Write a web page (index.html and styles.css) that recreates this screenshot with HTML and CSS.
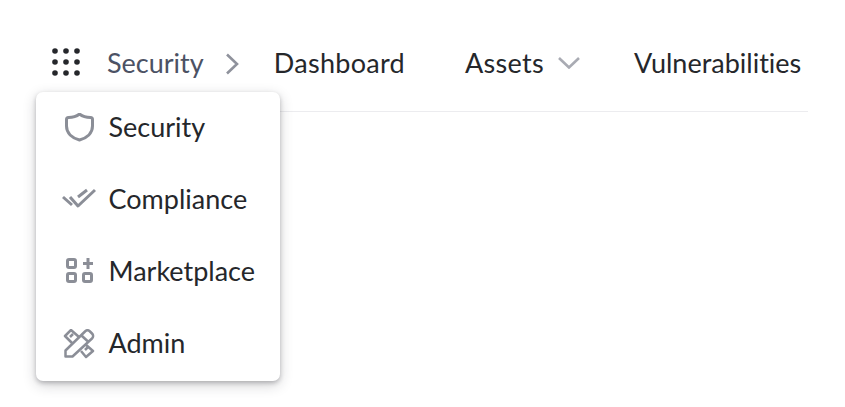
FILE: index.html
```html
<!DOCTYPE html>
<html lang="en">
<head>
    <meta charset="UTF-8">
    <title>Security</title>
    <link rel="stylesheet" href="styles.css">
</head>
<body>
    <div class="nav">
        <svg class="apps-icon" width="28" height="28" viewBox="0 0 28 28">
            <circle cx="3" cy="3" r="2.800"/><circle cx="14" cy="3" r="2.800"/><circle cx="25" cy="3" r="2.800"/>
            <circle cx="3" cy="14" r="2.800"/><circle cx="14" cy="14" r="2.800"/><circle cx="25" cy="14" r="2.800"/>
            <circle cx="3" cy="25" r="2.800"/><circle cx="14" cy="25" r="2.800"/><circle cx="25" cy="25" r="2.800"/>
        </svg>
        <span class="nav-product">Security</span>
        <svg class="nav-sep" width="14" height="22" viewBox="0 0 14 22"><path d="M2 1.500 L12 11 L2 20.500"/></svg>
        <a class="nav-link nav-first">Dashboard</a>
        <a class="nav-link nav-assets">Assets</a>
        <svg class="nav-caret" width="22" height="12" viewBox="0 0 22 12"><path d="M1 1 L11 10.500 L21 1"/></svg>
        <a class="nav-link nav-last">Vulnerabilities</a>
    </div>

    <div class="menu">
        <div class="menu-item">
            <svg class="menu-icon" width="34" height="30" viewBox="0 0 34 30"><path d="M17.500 1 C20 3 24 4.500 28.500 4.500 Q30.500 4.500 30.500 6.500 V13 C30.500 20 25 25 17.500 27 C10 25 4.500 20 4.500 13 V6.500 Q4.500 4.500 6.500 4.500 C11 4.500 15 3 17.500 1 Z"/></svg>
            <span class="menu-label">Security</span>
        </div>
        <div class="menu-item">
            <svg class="menu-icon" width="34" height="30" viewBox="0 0 34 30"><path d="M1 12 L10 20 M8 12 L16 21 L33 5 M16 12 L25 5"/></svg>
            <span class="menu-label">Compliance</span>
        </div>
        <div class="menu-item">
            <svg class="menu-icon" width="34" height="30" viewBox="0 0 34 30"><rect x="5.500" y="2.500" width="8" height="8" rx="1.500"/><rect x="5.500" y="16.500" width="8" height="8" rx="1.500"/><rect x="21.500" y="16.500" width="8" height="8" rx="1.500"/><path d="M26 1 V12 M21 6.500 H31"/></svg>
            <span class="menu-label">Marketplace</span>
        </div>
        <div class="menu-item">
            <svg class="menu-icon thin" width="34" height="30" viewBox="0 0 34 30"><path d="M3.500 27.500 V21.500 L23 2.500 C24.500 1 26.500 1 28 2.500 L30 4.500 C31.500 6 31.500 8 30 9.500 L10.500 27.500 Z M19.500 6.500 L26.500 13"/><path d="M11 15 L3 7 L9 1 L17 8 M8 8 L11 5 M23 15 L31 22 L24 28 L19 22 M23 21 L26 18"/></svg>
            <span class="menu-label">Admin</span>
        </div>
    </div>
</body>
</html>
```

FILE: styles.css
```css
html,
body {
    height: 100%;
}

body {
    position: relative;
    margin: 0;
    background-color: white;
    font-family: "Lato", sans-serif;
    font-variant-ligatures: none;
    color: #25272b;
}

.nav {
    display: flex;
    align-items: center;
    width: 756px;
    height: 98px;
    margin-left: 52px;
    padding-top: 13px;
    border-bottom: 1px solid #ececef;
}

.apps-icon {
    fill: #25272b;
}

.nav-product {
    margin-left: 27px;
    font-size: 27px;
    color: #4c5264;
}

.nav-sep {
    margin-left: 21px;
    margin-top: 3px;
    fill: none;
    stroke: #8f929c;
    stroke-width: 2.600;
}

.nav-link {
    font-size: 27px;
    letter-spacing: 0.3px;
}

.nav-first {
    margin-left: 35px;
}

.nav-assets {
    margin-left: 60px;
}

.nav-caret {
    margin-left: 14px;
    margin-top: 2px;
    fill: none;
    stroke: #a9abb3;
    stroke-width: 2.600;
}

.nav-last {
    margin-left: 54px;
    letter-spacing: 0;
}

.menu {
    position: absolute;
    top: 92px;
    left: 36px;
    width: 244px;
    padding-bottom: 1px;
    background-color: white;
    border-radius: 7px;
    box-shadow: 0 2px 4px rgba(30, 32, 40, 0.25), 0 4px 14px rgba(30, 32, 40, 0.2);
}

.menu-item {
    display: flex;
    align-items: center;
    gap: 12.500px;
    height: 72px;
    padding-left: 26px;
    font-size: 27px;
}

.menu-label {
    margin-top: -4px;
}

.menu-icon {
    fill: none;
    stroke: #8b8e97;
    stroke-width: 3;
    stroke-linejoin: round;
    flex-shrink: 0;
}

.menu-icon.thin {
    stroke-width: 2.500;
}
```
